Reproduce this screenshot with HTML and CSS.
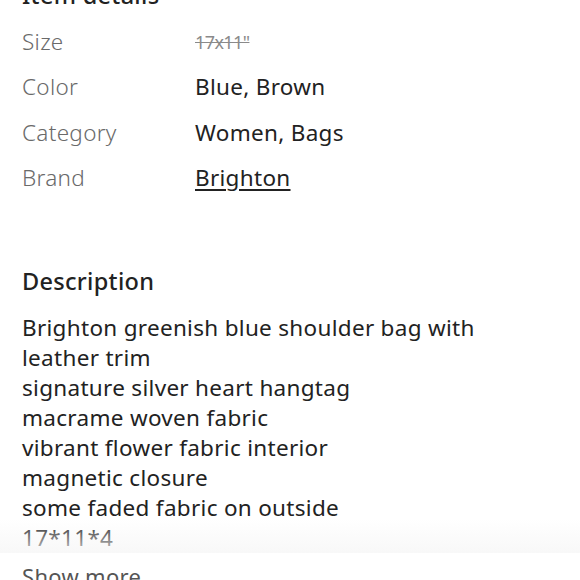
FILE: index.html
```html
<!DOCTYPE html>
<html>
<head>
<meta charset="utf-8">
<link rel="stylesheet" href="styles.css">
</head>
<body>
<div class="page">
  <section class="details">
    <h2 class="title">Item details</h2>
    <div class="rows">
      <div class="row"><span class="label">Size</span><span class="value size">17x11"</span></div>
      <div class="row"><span class="label">Color</span><span class="value">Blue, Brown</span></div>
      <div class="row"><span class="label">Category</span><span class="value">Women, Bags</span></div>
      <div class="row"><span class="label">Brand</span><a class="value link">Brighton</a></div>
    </div>
  </section>
  <section class="description">
    <h2 class="heading">Description</h2>
    <div class="desc-body">
      <p class="line">Brighton greenish blue shoulder bag with leather trim</p>
      <p class="line">signature silver heart hangtag</p>
      <p class="line">macrame woven fabric</p>
      <p class="line">vibrant flower fabric interior</p>
      <p class="line">magnetic closure</p>
      <p class="line">some faded fabric on outside</p>
      <p class="line">17*11*4</p>
      <div class="fade"></div>
    </div>
    <div class="more">Show more</div>
  </section>
</div>
</body>
</html>
```
FILE: styles.css
```css
html, body { margin: 0; padding: 0; background: #fff; }
body { font-family: "Noto Sans", Lato, sans-serif; color: #222; }
.page { width: 580px; height: 580px; overflow: hidden; padding: 0 22px; box-sizing: border-box; }
.details { margin-top: -20px; }
.title { margin: 0; font-size: 23.5px; font-weight: 500; line-height: 30px; color: #222; letter-spacing: 0.3px; }
.rows { padding-top: 9px; }
.row { display: flex; height: 45.3px; align-items: center; font-size: 22.5px; letter-spacing: 0.3px; }
.label { width: 173px; color: #6a6a6a; font-weight: 300; }
.value { color: #222; }
.size { color: #8a8a8a; text-decoration: line-through; font-size: 18px; letter-spacing: -0.6px; }
.link { text-decoration: underline; text-underline-offset: 3px; text-decoration-thickness: 1.5px; }
.description { margin-top: 65px; }
.heading { margin: 0 0 16px; font-size: 23.5px; font-weight: 500; line-height: 32px; color: #222; letter-spacing: 0.3px; }
.desc-body { position: relative; width: 480px; }
.line { margin: 0; font-size: 22.5px; letter-spacing: 0.3px; line-height: 30px; }
.fade { position: absolute; left: -22px; right: -100px; bottom: 0; height: 34px; background: linear-gradient(to bottom, rgba(250,250,250,0), rgba(246,246,246,0.78)); }
.more { margin-top: 8px; font-size: 22px; line-height: 30px; color: #555; letter-spacing: 0.3px; }
```
